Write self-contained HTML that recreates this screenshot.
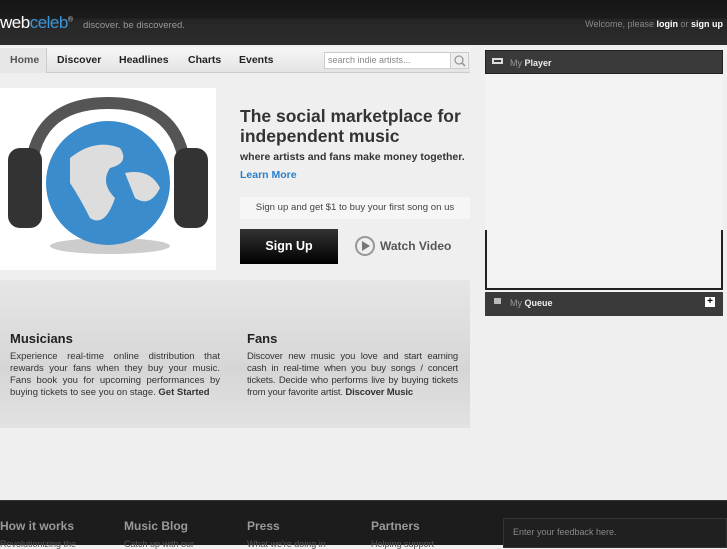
<!DOCTYPE html>
<html><head><style>
*{margin:0;padding:0;box-sizing:border-box}
body{width:727px;height:545px;overflow:hidden;background:#efefef;font-family:"Liberation Sans",Arial,sans-serif;position:relative}
.a{position:absolute}
</style></head><body>
<div class="a" style="left:0;top:0;width:727px;height:45px;background:linear-gradient(#161616 0,#1b1b1b 18px,#262626 19px,#2c2c2c 45px)"></div>
<div class="a" style="left:0;top:13px;font-size:17px;color:#fff;letter-spacing:-0.5px">web<span style="color:#3a95d8">celeb</span><sup style="font-size:7px;color:#ccc">®</sup></div>
<div class="a" style="left:83px;top:20px;font-size:9.5px;color:#999">discover. be discovered.</div>
<div class="a" style="right:4px;top:19px;font-size:9px;color:#888">Welcome, please <b style="color:#fff">login</b> or <b style="color:#fff">sign up</b></div>
<div class="a" style="left:0;top:47px;width:470px;height:26px;background:linear-gradient(#f6f6f6,#e4e4e4);border-bottom:1px solid #ccc"></div>
<div class="a" style="left:0;top:48px;width:47px;height:25px;background:#e6e6e6;border-right:1px solid #ccc"></div>
<div class="a" style="left:10px;top:54px;font-size:10.5px;font-weight:bold;color:#555">Home</div>
<div class="a" style="left:57px;top:54px;font-size:10.5px;font-weight:bold;color:#222">Discover</div>
<div class="a" style="left:119px;top:54px;font-size:10.5px;font-weight:bold;color:#222">Headlines</div>
<div class="a" style="left:188px;top:54px;font-size:10.5px;font-weight:bold;color:#222">Charts</div>
<div class="a" style="left:239px;top:54px;font-size:10.5px;font-weight:bold;color:#222">Events</div>
<div class="a" style="left:324px;top:52px;width:145px;height:17px;background:#fff;border:1px solid #ccc"></div>
<div class="a" style="left:328px;top:55px;font-size:9px;color:#888">search indie artists...</div>
<div class="a" style="left:450px;top:52px;width:19px;height:17px;background:#eee;border:1px solid #ccc"></div>
<svg class="a" style="left:453px;top:54px" width="14" height="14"><circle cx="6" cy="6" r="4" fill="none" stroke="#999" stroke-width="1.3"/><path d="M9 9 L12 12" stroke="#999" stroke-width="1.6"/></svg>
<div class="a" style="left:0;top:280px;width:470px;height:148px;background:linear-gradient(#e6e6e6,#d6d6d6 60%,#e2e2e2)"></div>
<div class="a" style="left:0;top:88px;width:216px;height:182px;background:#fff"></div>
<svg class="a" style="left:0;top:88px" width="216" height="182">
<ellipse cx="110" cy="158" rx="60" ry="8" fill="#ccc"/>
<circle cx="108" cy="95" r="62" fill="#3a8ccc"/>
<path d="M70 70 Q95 50 120 60 Q130 75 110 80 Q100 95 115 110 Q105 140 90 130 Q80 110 70 95Z M125 85 Q150 80 160 100 Q150 120 135 110Z" fill="#ddd"/>
<path d="M30 95 Q30 15 108 15 Q186 15 186 95" fill="none" stroke="#555" stroke-width="12"/>
<rect x="8" y="60" width="34" height="80" rx="12" fill="#333"/>
<rect x="174" y="60" width="34" height="80" rx="12" fill="#333"/>
</svg>
<div class="a" style="left:240px;top:106px;font-size:17.5px;font-weight:bold;color:#333;line-height:20px">The social marketplace for<br>independent music</div>
<div class="a" style="left:240px;top:151px;font-size:10.5px;font-weight:bold;color:#333">where artists and fans make money together.</div>
<div class="a" style="left:240px;top:169px;font-size:10.5px;font-weight:bold;color:#2a7fc9">Learn More</div>
<div class="a" style="left:240px;top:197px;width:230px;height:22px;background:#f6f6f6;font-size:9.6px;color:#444;text-align:center;line-height:22px">Sign up and get $1 to buy your first song on us</div>
<div class="a" style="left:240px;top:229px;width:98px;height:35px;background:linear-gradient(#333,#000);color:#fff;font-size:12.5px;font-weight:bold;text-align:center;line-height:35px">Sign Up</div>
<div class="a" style="left:355px;top:236px;width:20px;height:20px;border:2px solid #999;border-radius:50%"></div>
<div class="a" style="left:362px;top:241px;width:0;height:0;border-left:8px solid #777;border-top:5px solid transparent;border-bottom:5px solid transparent"></div>
<div class="a" style="left:380px;top:239px;font-size:12px;font-weight:bold;color:#555">Watch Video</div>
<div class="a" style="left:10px;top:331px;font-size:13px;font-weight:bold;color:#222">Musicians</div>
<div class="a" style="left:10px;top:351px;width:210px;font-size:9.5px;color:#333;line-height:12px;text-align:justify">Experience real-time online distribution that rewards your fans when they buy your music. Fans book you for upcoming performances by buying tickets to see you on stage. <b>Get Started</b></div>
<div class="a" style="left:247px;top:331px;font-size:13px;font-weight:bold;color:#222">Fans</div>
<div class="a" style="left:247px;top:351px;width:211px;font-size:9.5px;color:#333;line-height:12px;text-align:justify;letter-spacing:-0.15px">Discover new music you love and start earning cash in real-time when you buy songs / concert tickets. Decide who performs live by buying tickets from your favorite artist. <b>Discover Music</b></div>
<div class="a" style="left:485px;top:50px;width:238px;height:24px;background:#3a3a3a;border:1px solid #222"></div>
<div class="a" style="left:492px;top:58px;width:11px;height:6px;border:2px solid #ddd"></div>
<div class="a" style="left:510px;top:58px;font-size:9px;color:#999">My <b style="color:#eee">Player</b></div>
<div class="a" style="left:485px;top:74px;width:238px;height:218px;background:#f3f3f3"></div>
<div class="a" style="left:485px;top:230px;width:238px;height:60px;border:2px solid #222;border-top:none"></div>
<div class="a" style="left:485px;top:292px;width:238px;height:24px;background:#3a3a3a"></div>
<div class="a" style="left:494px;top:298px;width:7px;height:6px;background:#bbb"></div>
<div class="a" style="left:510px;top:298px;font-size:9px;color:#999">My <b style="color:#eee">Queue</b></div>
<div class="a" style="left:705px;top:297px;width:10px;height:10px;background:#fff;color:#000;font-size:10px;font-weight:bold;line-height:10px;text-align:center">+</div>
<div class="a" style="left:0;top:500px;width:727px;height:45px;background:#1c1c1c;border-top:1px solid #333"></div>
<div class="a" style="left:0;top:519px;font-size:12px;font-weight:bold;color:#999">How it works</div>
<div class="a" style="left:124px;top:519px;font-size:12px;font-weight:bold;color:#999">Music Blog</div>
<div class="a" style="left:247px;top:519px;font-size:12px;font-weight:bold;color:#999">Press</div>
<div class="a" style="left:371px;top:519px;font-size:12px;font-weight:bold;color:#999">Partners</div>
<div class="a" style="left:0;top:539px;font-size:9px;color:#555">Revolutionizing the</div>
<div class="a" style="left:124px;top:539px;font-size:9px;color:#555">Catch up with our</div>
<div class="a" style="left:247px;top:539px;font-size:9px;color:#555">What we're doing in</div>
<div class="a" style="left:371px;top:539px;font-size:9px;color:#555">Helping support</div>
<div class="a" style="left:503px;top:518px;width:224px;height:30px;background:#202020;border:1px solid #333"></div>
<div class="a" style="left:513px;top:527px;font-size:9px;color:#888">Enter your feedback here.</div>
</body></html>
